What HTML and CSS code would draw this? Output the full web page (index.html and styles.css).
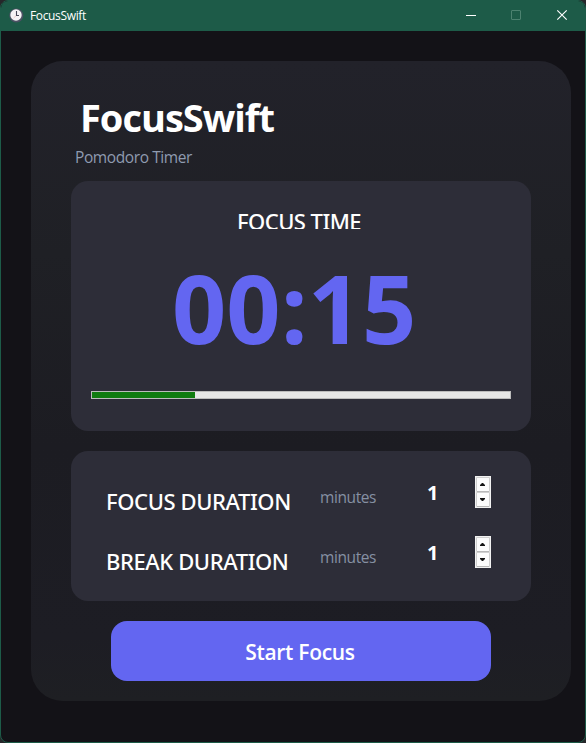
FILE: index.html
```html
<!DOCTYPE html>
<html lang="en">
<head>
<meta charset="utf-8">
<title>FocusSwift</title>
<link rel="stylesheet" href="styles.css">
</head>
<body>
<div class="window">
  <header class="titlebar">
    <svg class="app-icon" width="16" height="16" viewBox="0 0 16 16"><circle cx="8.300" cy="7.500" r="7" fill="#4b5163"/><circle cx="8" cy="7" r="5.700" fill="#f6f3f6"/><path d="M8.500 3v4.500h2.500" fill="none" stroke="#49495a" stroke-width="1.1"/><path d="M8 7.800 5.600 10" stroke="#e8b7b7" stroke-width=".7"/></svg>
    <span class="app-name">FocusSwift</span>
    <svg class="controls" width="135" height="30" viewBox="0 0 135 30" fill="none"><path d="M16 14.500h10" stroke="#fff"/><rect x="61.500" y="9.500" width="9" height="9" rx=".5" stroke="#4c8270"/><path d="m107.300 9.300 9.400 9.400m0-9.400-9.400 9.400" stroke="#fff" stroke-width="1.150"/></svg>
  </header>
  <main class="content">
    <section class="card">
      <div class="heading">
        <h1 class="title">FocusSwift</h1>
        <p class="subtitle">Pomodoro Timer</p>
      </div>
      <div class="panel timer">
        <h2 class="mode">FOCUS TIME</h2>
        <div class="clock">00:15</div>
        <div class="progress"><div class="progress-fill"></div></div>
      </div>
      <div class="panel settings">
        <div class="row">
          <span class="label">FOCUS DURATION</span>
          <span class="unit">minutes</span>
          <span class="value">1</span>
          <svg class="spinner" width="16" height="32" viewBox="0 0 16 32"><rect width="16" height="32" fill="#f2f2f2"/><path d="M1.500 1.500h13v14h-13zM1.500 16.500h13v14h-13z" fill="#fcfcfc" stroke="#d0d0d0"/><path d="M2 15.500h12M2 30.500h12" stroke="#b8b8b8"/><path d="M5 10V9l2-2h1l2 2v1zM5 22v1l2 2h1l2-2v-1z" fill="#151515"/></svg>
        </div>
        <div class="row">
          <span class="label">BREAK DURATION</span>
          <span class="unit">minutes</span>
          <span class="value">1</span>
          <svg class="spinner" width="16" height="32" viewBox="0 0 16 32"><rect width="16" height="32" fill="#f2f2f2"/><path d="M1.500 1.500h13v14h-13zM1.500 16.500h13v14h-13z" fill="#fcfcfc" stroke="#d0d0d0"/><path d="M2 15.500h12M2 30.500h12" stroke="#b8b8b8"/><path d="M5 10V9l2-2h1l2 2v1zM5 22v1l2 2h1l2-2v-1z" fill="#151515"/></svg>
        </div>
      </div>
      <button class="start"><span class="start-text">Start Focus</span></button>
    </section>
  </main>
</div>
</body>
</html>
```

FILE: styles.css
```css
* { box-sizing: border-box; }
body { margin: 0; background: #26272a; font-family: "Open Sans", "Noto Sans", sans-serif; color: #fff; }
h1, h2, p { margin: 0; }
.window { width: 586px; height: 743px; border: 1px solid #1d5b48; border-radius: 8px; overflow: hidden; background: #131217; }
.titlebar { height: 30px; display: flex; align-items: center; background: #1d5b48; padding-left: 7px; }
.app-icon { display: block; }
.app-name { margin-left: 6px; font-size: 12px; line-height: 16px; letter-spacing: -.35px; white-space: nowrap; }
.controls { display: block; margin-left: auto; }
.content { padding: 30px; }
.card { width: 540px; height: 640px; padding: 0 40px; border-radius: 32px; background: linear-gradient(#22222a, #1f2025 30%, #1c1c22 60%, #1d1d24 90%, #1e1f23); }
.heading { height: 120px; padding-top: 32px; }
.title { margin-left: 9px; font-size: 38px; line-height: 48px; font-weight: 700; letter-spacing: -1px; white-space: nowrap; }
.subtitle { margin-left: 4px; margin-top: 5px; font-size: 15.5px; line-height: 22px; color: #8f9bb0; letter-spacing: -.4px; }
.panel { width: 460px; border-radius: 17px; background: #2d2d38; }
.timer { height: 250px; padding: 25px 20px 0; }
.mode { width: 130px; height: 23px; overflow: hidden; margin-left: 146px; font-family: "Noto Sans", sans-serif; font-size: 22px; line-height: 30px; font-weight: 500; letter-spacing: -.55px; white-space: nowrap; }
.clock { height: 162px; padding-left: 81px; font-size: 95px; line-height: 157px; font-weight: 700; color: #6366f1; white-space: nowrap; letter-spacing: 0; }
.progress { width: 420px; height: 8px; border: 1px solid #bcbcbc; background: #e6e6e6; }
.progress-fill { width: 103px; height: 6px; background: #107c10; }
.settings { height: 150px; margin-top: 20px; padding: 15px 40px 15px 35px; }
.row { height: 60px; display: grid; grid-template-columns: 214px 106px 49px 16px; align-items: start; }
.label { padding-top: 20px; font-family: "Noto Sans", sans-serif; font-size: 22px; line-height: 30px; font-weight: 500; letter-spacing: -.4px; white-space: nowrap; }
.unit { padding-top: 20px; font-size: 15.5px; line-height: 22px; color: #8690a3; letter-spacing: -.4px; }
.value { padding: 12px 0 0 1px; font-size: 20px; line-height: 30px; font-weight: 700; }
.spinner { display: block; margin-top: 10px; }
.start { display: block; width: 380px; height: 60px; margin: 20px auto 0; padding: 0; border: 0; border-radius: 16px; background: #6366f1; color: #fff; font: 600 21px/60px "Open Sans", "Noto Sans", sans-serif; }
.start-text { position: relative; left: -1px; top: 1px; letter-spacing: -.3px; }
```
